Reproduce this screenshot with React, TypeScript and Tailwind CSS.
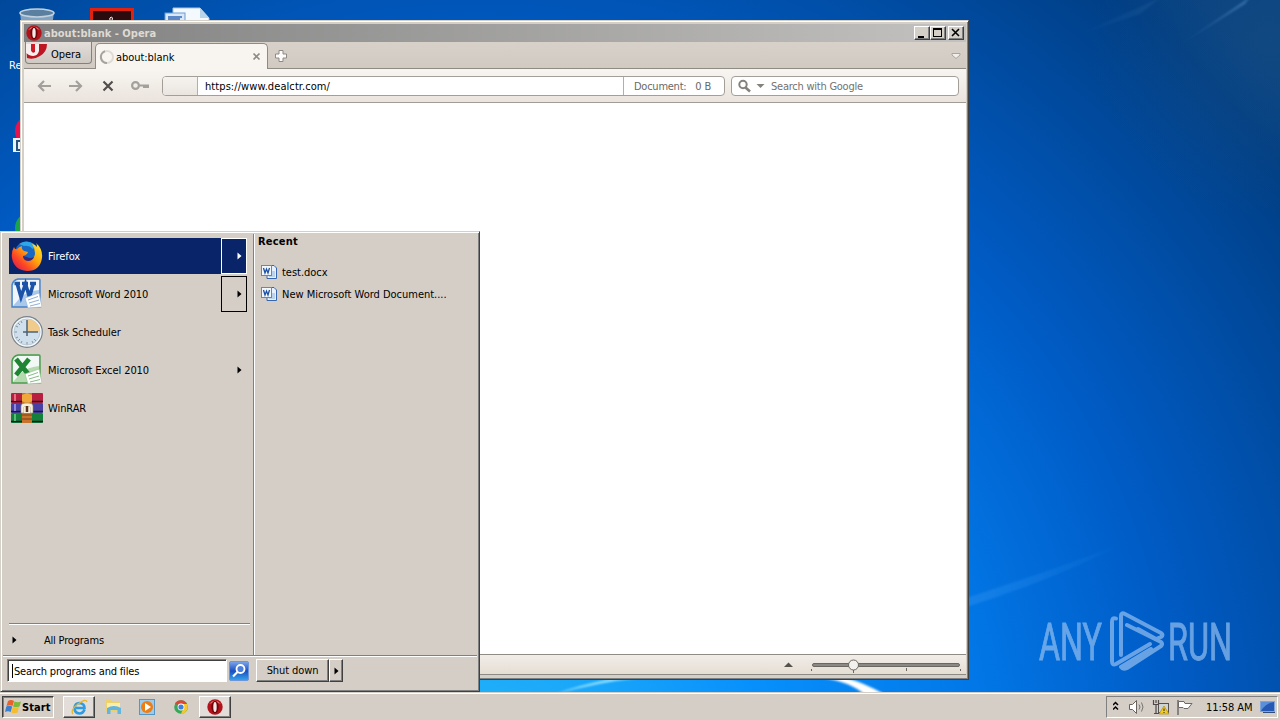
import type { ReactNode } from "react";
import { clsx } from "clsx";

const RAISED =
  "border border-t-white border-l-white border-r-[#404040] border-b-[#404040] shadow-[inset_-1px_-1px_0_#808080]";

function Wallpaper() {
  return (
    <svg className="absolute inset-0" width="1280" height="720" viewBox="0 0 1280 720">
      <defs>
        <radialGradient id="sky" gradientUnits="userSpaceOnUse" cx="480" cy="760" r="1050">
          <stop offset="0" stopColor="#25b6f8" />
          <stop offset="0.14" stopColor="#18a4fa" />
          <stop offset="0.27" stopColor="#0790fc" />
          <stop offset="0.47" stopColor="#0278e8" />
          <stop offset="0.66" stopColor="#005cc6" />
          <stop offset="0.84" stopColor="#004a9e" />
          <stop offset="0.95" stopColor="#003e84" />
          <stop offset="1" stopColor="#064080" />
        </radialGradient>
        <radialGradient id="haze" gradientUnits="userSpaceOnUse" cx="1270" cy="40" r="180">
          <stop offset="0" stopColor="#2a5c86" stopOpacity="0.3" />
          <stop offset="1" stopColor="#2a5c86" stopOpacity="0" />
        </radialGradient>
        <linearGradient id="ray" x1="1" y1="0" x2="0" y2="1">
          <stop offset="0" stopColor="#5b97cf" stopOpacity="0.5" />
          <stop offset="1" stopColor="#5b97cf" stopOpacity="0" />
        </linearGradient>
        <linearGradient id="glow" x1="0" y1="0" x2="1" y2="0">
          <stop offset="0" stopColor="#2f93ef" stopOpacity="0.45" />
          <stop offset="1" stopColor="#2f93ef" stopOpacity="0" />
        </linearGradient>
        <filter id="soft">
          <feGaussianBlur stdDeviation="1.3" />
        </filter>
      </defs>
      <rect width="1280" height="720" fill="url(#sky)" />
      <rect x="1050" width="230" height="240" fill="url(#haze)" />
      <path d="M1250 -3L1175 48L1245 4Z" fill="url(#ray)" filter="url(#soft)" />
      <path d="M1160 -2L1070 38L1140 14Z" fill="url(#ray)" opacity="0.3" filter="url(#soft)" />
      <path d="M960 609Q1060 578 1130 540Q1060 568 960 600Z" fill="url(#glow)" filter="url(#soft)" />
      <path d="M555 694Q600 682 640 678L610 679Q580 685 555 694Z" fill="#8fe0ff" filter="url(#soft)" />
      <path d="M824 678Q850 682 864 694H884Q862 682 846 678Z" fill="#fff" filter="url(#soft)" />
    </svg>
  );
}

function DesktopIcons() {
  return (
    <svg className="absolute inset-0" width="240" height="240" viewBox="0 0 240 240">
      <path d="M20 12L24 50H49L54 12Z" fill="#7fa3c4" />
      <ellipse cx="37" cy="13" rx="17" ry="4" fill="#5b7f9f" stroke="#c3d2de" strokeWidth="1.600" />
      <rect x="91.500" y="9.500" width="41" height="30" fill="#2b0b0d" stroke="#e3210f" strokeWidth="3" />
      <path d="M110 21Q109 17 111.500 17Q113 17 112 21" fill="none" stroke="#fff" strokeWidth="1" />
      <path d="M173 8H200L209 18V30H173Z" fill="#f4f9fd" stroke="#a9c6dd" />
      <path d="M200 8V18H209Z" fill="#b9d3e8" />
      <rect x="165" y="13" width="20" height="16" fill="#d9e8f8" stroke="#6d9bd2" />
      <path d="M168 17H182M168 19H180" stroke="#3568b8" strokeWidth="1.500" />
      <circle cx="31" cy="131" r="16" fill="#e5124d" />
      <rect x="13" y="138" width="14" height="14" fill="#e8f3fb" />
      <path d="M21 141H17V150H21" fill="none" stroke="#27537a" strokeWidth="2" />
      <circle cx="31" cy="228" r="16" fill="#1aa34a" />
    </svg>
  );
}

function OperaIcon({ size }: { size: number }) {
  return (
    <svg width={size} height={size} viewBox="0 0 16 16" className="shrink-0">
      <circle cx="8" cy="8" r="7.700" fill="#b3121a" />
      <path d="M2 5Q8 -2 14 5Q8 2 2 5Z" fill="#e8776f" />
      <ellipse cx="8" cy="8" rx="3.600" ry="6.200" fill="#6e0509" />
      <ellipse cx="8" cy="8" rx="1.700" ry="5" fill="#f4e9e6" />
    </svg>
  );
}

function Caption({ children }: { children: ReactNode }) {
  return (
    <div className={clsx("h-[14px] w-4 bg-[#d4d0c8]", RAISED)}>
      <svg width="14" height="12" viewBox="0 0 14 12" className="block" shapeRendering="crispEdges">
        {children}
      </svg>
    </div>
  );
}

function TitleBar() {
  return (
    <div className="flex h-[18px] items-center bg-gradient-to-r from-[#808080] to-[#c3c2c0] pr-[2px] pl-[2px]">
      <OperaIcon size={16} />
      <span className="ml-[2px] text-[11px] font-bold tracking-[0.02px] text-[#dedad3]">about:blank - Opera</span>
      <div className="ml-auto flex">
        <Caption>
          <path d="M3 9H9V11H3Z" fill="#000" />
        </Caption>
        <Caption>
          <path d="M2 1H11V10H2ZM3 3V9H10V3Z" fill="#000" fillRule="evenodd" />
        </Caption>
        <div className="w-[2px]" />
        <Caption>
          <path d="M3 2L10 9M10 2L3 9" stroke="#000" strokeWidth="1.600" shapeRendering="auto" />
        </Caption>
      </div>
    </div>
  );
}

function TabBar() {
  return (
    <div className="flex h-[27px] border-b border-[#8e8a84] bg-gradient-to-b from-[#d8d1ca] to-[#d0cac2]">
      <div className="ml-px flex h-[22px] w-[67px] items-center rounded-b-[4px] border border-t-0 border-[#85807b] bg-gradient-to-b from-[#e3deda] to-[#cfc9c3]">
        <svg width="22" height="18" viewBox="0 0 22 18" className="-mt-[1px] shrink-0">
          <path d="M0 1H21Q21 9 14 13Q8 17 1 15Z" fill="#bd1622" />
          <path d="M0 1H5V7Q6 11 9 9V1H13V8Q11 15 3 12L0 10Z" fill="#f7efed" />
          <path d="M5 1H9V7Q7 10 5 7Z" fill="#cf1a28" />
        </svg>
        <span className="ml-[3px] pt-[3px] text-[11px] tracking-[-0.05px]">Opera</span>
      </div>
      <div className="-mb-px ml-[3px] flex h-[26px] w-[173px] items-center rounded-t-[5px] border border-b-0 border-[#8e8a84] bg-[#f8f5f1] pl-[3px] mt-px">
        <svg width="16" height="16" viewBox="0 0 16 16" className="shrink-0">
          <circle cx="8" cy="8" r="6" fill="none" stroke="#dedbd7" strokeWidth="2" />
          <path d="M8 14A6 6 0 0 1 6 2.300" fill="none" stroke="#a5a29f" strokeWidth="2" />
        </svg>
        <span className="ml-[1px] pt-[1px] text-[11px] tracking-[-0.05px]">about:blank</span>
        <svg width="9" height="9" viewBox="0 0 9 9" className="mr-[6px] ml-auto">
          <path d="M1.500 1.500L7.500 7.500M7.500 1.500L1.500 7.500" stroke="#8e8a86" strokeWidth="1.700" />
        </svg>
      </div>
      <svg width="14" height="14" viewBox="0 0 14 14" className="mt-[7px] ml-[6px]">
        <path d="M5 1.500H9V5H12.500V9H9V12.500H5V9H1.500V5H5Z" fill="#fdfcfa" stroke="#8e8a86" />
      </svg>
      <svg width="10" height="8" viewBox="0 0 10 8" className="mt-[10px] mr-[5px] ml-auto">
        <path d="M1 1.500H9V3L5 6.500L1 3Z" fill="#f2efeb" stroke="#aaa49d" />
      </svg>
    </div>
  );
}

function Toolbar() {
  return (
    <div className="flex h-[34px] items-center border-b border-[#a19c96] bg-gradient-to-b from-[#f8f5f1] to-[#ebe4dd] pr-[7px]">
      <svg width="138" height="32" viewBox="0 0 138 32" className="shrink-0" fill="none" stroke="#a39f9b" strokeWidth="2.200">
        <path d="M27 16H15M20 11L15 16L20 21" />
        <path d="M45 16H57M52 11L57 16L52 21" />
        <path d="M79.500 11.500L88.500 20.500M88.500 11.500L79.500 20.500" stroke="#514e4b" strokeWidth="2.200" />
        <circle cx="111.500" cy="15.500" r="3.400" strokeWidth="2.200" />
        <path d="M115.500 15.500H125M119 17H125" strokeWidth="2" />
      </svg>
      <div className="flex h-5 w-[563px] items-center rounded-[4px] border border-[#a39e98] bg-white">
        <div className="h-full w-[35px] shrink-0 rounded-l-[3px] border-r border-[#b3aea9] bg-gradient-to-b from-[#f6f3ef] to-[#eae5df]" />
        <span className="ml-[7px] pt-px text-[11px] tracking-[0.08px]">https://www.dealctr.com/</span>
        <div className="ml-auto flex h-full w-[101px] items-center border-l border-[#b3aea9] pl-[10px] text-[11px] text-[#6b6865]">
          <span className="pt-[2px] tracking-[-0.25px]">Document:</span>
          <span className="ml-[9px] pt-[2px] tracking-[-0.2px]">0 B</span>
        </div>
      </div>
      <div className="ml-auto flex h-5 w-[228px] items-center rounded-[4px] border border-[#a39e98] bg-white pl-[6px]">
        <svg width="28" height="14" viewBox="0 0 28 14">
          <circle cx="5" cy="5.500" r="3.700" fill="none" stroke="#85817d" strokeWidth="2" />
          <path d="M7.500 8.500L12 12.500" stroke="#85817d" strokeWidth="2.600" />
          <path d="M18.500 5H26.500L22.500 9Z" fill="#85817d" />
        </svg>
        <span className="ml-[5px] pt-px text-[11px] tracking-[-0.24px] text-[#74716e]">Search with Google</span>
      </div>
    </div>
  );
}

function BrowserWindow() {
  return (
    <div className="absolute top-[20px] left-[20px] flex h-[660px] w-[949px] flex-col border border-t-[#d4d0c8] border-r-[#404040] border-b-[#404040] border-l-[#d4d0c8] bg-[#d4d0c8] p-[3px] pb-[4px] pr-[2px] shadow-[inset_1px_1px_0_#fff,inset_-1px_-1px_0_#808080]">
      <TitleBar />
      <TabBar />
      <Toolbar />
      <div className="flex-1 bg-white" />
      <div className="flex h-[21px] border-t border-[#8e8a84] border-b bg-gradient-to-b from-[#f2ede8] to-[#e5ded4]">
        <svg width="200" height="20" viewBox="0 0 200 20" className="mr-[3px] ml-auto">
          <path d="M21 12L25.500 7.500L30 12Z" fill="#55524e" />
          <rect x="49.500" y="8.500" width="147" height="3" rx="1.500" fill="#8d8883" stroke="#6b6762" />
          <path d="M48.500 14V16M143.500 13V16M197.500 14V16M90.500 15V18" stroke="#6b6762" />
          <circle cx="90.500" cy="10" r="5" fill="#f3f1ee" stroke="#6b6762" />
        </svg>
      </div>
    </div>
  );
}

function FirefoxIcon() {
  return (
    <svg width="32" height="32" viewBox="0 0 32 32">
      <defs>
        <linearGradient id="fx" x1="0.95" y1="0.1" x2="0.1" y2="0.9">
          <stop offset="0" stopColor="#ffe226" />
          <stop offset="0.4" stopColor="#ffa60d" />
          <stop offset="0.75" stopColor="#fb4425" />
          <stop offset="1" stopColor="#e0204e" />
        </linearGradient>
      </defs>
      <circle cx="15.500" cy="13" r="11.500" fill="#1769c5" />
      <path d="M8 4Q15 -1 23 4Q25 7 22 9Q18 5 13 6Z" fill="#2fa5ea" />
      <path
        d="M3 7Q4 10 6 9Q8 7 11 6Q10 9 13 11L17 12Q16 15 12 16Q13 20 18 20Q24 19 24 13Q24 8 21 4Q25 5 26 7Q26 4 25 3Q32 9 31 18Q29 31 16 31Q3 30 1 18Q0 12 3 7Z"
        fill="url(#fx)"
      />
      <path d="M12 16Q12 21 18 21Q22 20 23 17Q19 19 16 17Z" fill="#38277a" />
    </svg>
  );
}

function OfficeIcon({ kind }: { kind: "word" | "excel" }) {
  const word = kind === "word";
  const main = word ? "#1b53a8" : "#1f8434";
  return (
    <svg width="32" height="32" viewBox="0 0 32 32" className="-ml-[2px]">
      <path d="M8 1H29Q30 1 30 2V29H2V7Q3 2 8 1Z" fill={word ? "#a9c8ea" : "#b5dab0"} stroke={word ? "#4a83c6" : "#489c4d"} strokeWidth="1.400" />
      <path d="M3 8Q4 2 9 2H29V12Q17 13 10 20L3 28Z" fill="#f7fbfe" opacity="0.9" />
      {word ? (
        <path d="M4.500 5.500H10M12 5.500H18M20 5.500H26M7 5L11 19L15.500 6L19.500 19L23.500 5" fill="none" stroke={main} strokeWidth="3.600" />
      ) : (
        <path d="M6 5L19 21M19 5L6 21" stroke={main} strokeWidth="4.800" />
      )}
      <path d="M15 20L29 15L32 29L18 30Z" fill="#fff" stroke={word ? "#9ab9dd" : "#9cc79b"} strokeWidth="0.700" />
      <path d="M18 22L28 18.500M19 25L29 22M20 28L30 25.500" stroke={word ? "#8faed4" : "#87bb88"} />
    </svg>
  );
}

function ClockIcon() {
  return (
    <svg width="34" height="34" viewBox="0 0 34 34">
      <circle cx="17" cy="17" r="15.300" fill="#f4f7f9" stroke="#77838c" strokeWidth="1.200" />
      <circle cx="17" cy="17" r="13" fill="#cfdfec" stroke="#b5c3ce" strokeWidth="0.800" />
      <path d="M17 17V4A13 13 0 0 1 30 17Z" fill="#f0cb8b" />
      <path d="M17 5V21M13 17H28" stroke="#4d6373" strokeWidth="1.500" />
      <path d="M4.500 17H7M17 27V29.500M8 8L10 10M8 26L10 24M26 26L24 24M5.700 11L8 12M5.700 23L8 22M11 28L12 26M23 28L22 26M11 6L12 8" stroke="#8195a5" />
    </svg>
  );
}

function WinRarIcon() {
  return (
    <svg width="34" height="32" viewBox="0 0 34 32">
      <rect x="1" y="1" width="32" height="10" rx="1" fill="#b81e3d" />
      <rect x="1" y="11" width="32" height="10" rx="1" fill="#4840a5" />
      <rect x="1" y="21" width="32" height="10" rx="1" fill="#13803c" />
      <path d="M1 9.500H33M1 19.500H33M1 29.500H33" stroke="#1c1633" strokeWidth="1.500" />
      <path d="M5 2V9" stroke="#e66c80" strokeWidth="2" />
      <path d="M5 12V19" stroke="#8e88de" strokeWidth="2" />
      <path d="M5 22V29" stroke="#57be77" strokeWidth="2" />
      <rect x="12" y="1" width="10" height="30" fill="#c6742b" />
      <path d="M12 3L17 1L22 3V9L17 12L12 9Z" fill="#f0a73b" />
      <path d="M12 23H22M12 27H22" stroke="#7e3f14" />
      <path d="M11 21V14Q11 11 17 11Q23 11 23 14V21H20V15H14V21Z" fill="#f6efdc" stroke="#8a8371" strokeWidth="0.600" />
      <path d="M14 15H20V21H14Z" fill="#f6efdc" />
      <path d="M17 14V20" stroke="#5d3018" strokeWidth="2.500" />
    </svg>
  );
}

const PROGRAMS: { name: string; icon: ReactNode; arrow?: boolean; boxed?: boolean }[] = [
  { name: "Firefox", icon: <FirefoxIcon />, arrow: true, boxed: true },
  { name: "Microsoft Word 2010", icon: <OfficeIcon kind="word" />, arrow: true, boxed: true },
  { name: "Task Scheduler", icon: <ClockIcon /> },
  { name: "Microsoft Excel 2010", icon: <OfficeIcon kind="excel" />, arrow: true },
  { name: "WinRAR", icon: <WinRarIcon /> },
];

function Arrow() {
  return (
    <svg width="5" height="8" viewBox="0 0 5 8">
      <path d="M0.500 0.500L4.500 4L0.500 7.500Z" fill="currentColor" />
    </svg>
  );
}

function RecentDoc({ name }: { name: string }) {
  return (
    <div className="flex h-[22px] items-center">
      <svg width="16" height="16" viewBox="0 0 16 16" className="shrink-0">
        <path d="M6 1.500H13L15.500 4V14.500H6Z" fill="#e8f1fb" stroke="#3666ad" />
        <path d="M10 8H14M10 10H14M8 12H14" stroke="#91b3dd" />
        <rect x="0.500" y="1.500" width="10" height="10" fill="#f3f8fd" stroke="#5a8ac6" />
        <path d="M2.500 4L4 9L5.500 5L7 9L8.500 4" fill="none" stroke="#1d4fa1" strokeWidth="1.300" />
      </svg>
      <span className="ml-[5px] text-[11px] tracking-[-0.02px]">{name}</span>
    </div>
  );
}

function StartMenu() {
  return (
    <div className="absolute top-[231px] left-0 flex h-[461px] w-[480px] flex-col border border-t-[#d4d0c8] border-r-[#404040] border-b-[#404040] border-l-[#d4d0c8] bg-[#d5cec7] p-[2px] shadow-[inset_1px_1px_0_#fff,inset_-1px_-1px_0_#808080]">
      <div className="flex h-[421px]">
        <div className="flex w-[251px] flex-col border-r border-[#808080] pt-[4px] pl-[6px]">
          {PROGRAMS.map((p, i) => (
            <div
              key={p.name}
              className={clsx("mb-[2px] flex h-9 w-[238px] items-center", i === 0 && "bg-[#0a246a] text-white")}
            >
              <div className="flex w-[36px] shrink-0 justify-center">{p.icon}</div>
              <span className="ml-[3px] text-[11px] tracking-[-0.08px]">{p.name}</span>
              {p.arrow && (
                <div
                  className={clsx(
                    "ml-auto flex h-full w-[26px] items-center justify-end border pr-[4px]",
                    !p.boxed && "border-transparent",
                    p.boxed && (i === 0 ? "border-white" : "border-black"),
                  )}
                >
                  <Arrow />
                </div>
              )}
            </div>
          ))}
          <div className="mt-auto w-[241px] border-t border-b border-t-[#808080] border-b-white" />
          <div className="flex h-[30px] items-center pl-[3px] text-[11px]">
            <Arrow />
            <span className="ml-[27px] tracking-[-0.2px]">All Programs</span>
          </div>
        </div>
        <div className="flex-1 border-l border-white pl-[3px]">
          <div className="pt-px text-[11px] leading-[14px] font-bold tracking-[0.2px]">Recent</div>
          <div className="mt-[12px] pl-[3px]">
            <RecentDoc name="test.docx" />
            <RecentDoc name="New Microsoft Word Document...." />
          </div>
        </div>
      </div>
      <div className="border-t border-b border-t-[#808080] border-b-white" />
      <div className="flex items-start pt-[2px] pl-[4px]">
        <div className="flex h-[23px] w-[220px] items-center border border-t-[#808080] border-r-white border-b-white border-l-[#808080] bg-white pl-[4px] shadow-[inset_1px_1px_0_#404040]">
          <div className="h-[14px] w-px bg-black" />
          <span className="ml-px pt-px text-[11px] tracking-[-0.18px]">Search programs and files</span>
        </div>
        <svg width="20" height="20" viewBox="0 0 20 20" className="mt-[2px] ml-[2px]">
          <defs>
            <linearGradient id="find" x1="0" y1="0" x2="0" y2="1">
              <stop offset="0" stopColor="#7ea9ec" />
              <stop offset="0.5" stopColor="#1c4fc0" />
              <stop offset="1" stopColor="#35a6ee" />
            </linearGradient>
          </defs>
          <rect x="0.500" y="0.500" width="19" height="19" rx="1.500" fill="url(#find)" stroke="#6e95d6" />
          <circle cx="11.500" cy="8" r="4" fill="#4c80dd" stroke="#fff" strokeWidth="1.800" />
          <path d="M8.500 11L4 15.500" stroke="#fff" strokeWidth="2.200" />
        </svg>
        <div className={clsx("ml-[7px] flex h-[23px] w-[73px] items-center justify-center text-[11px] tracking-[-0.1px]", RAISED)}>
          Shut down
        </div>
        <div className={clsx("flex h-[23px] w-[14px] items-center justify-center", RAISED)}>
          <Arrow />
        </div>
      </div>
    </div>
  );
}

function AnyRunLogo() {
  return (
    <svg className="absolute top-[606px] left-[1034px]" width="246" height="70" viewBox="0 0 246 70">
      <g fill="#8fbdf0" stroke="#8fbdf0" strokeWidth="1" opacity="0.72" fontFamily="Roboto, sans-serif" fontSize="52">
        <text x="5" y="54" textLength="63" lengthAdjust="spacingAndGlyphs">ANY</text>
        <text x="134" y="54" textLength="64" lengthAdjust="spacingAndGlyphs">RUN</text>
      </g>
      <g fill="none" stroke="#8fbdf0" strokeWidth="4" opacity="0.72" strokeLinejoin="round" strokeLinecap="round">
        <path d="M82 12.500Q78 11 78 16V55Q78 60 82 58L116 38" />
        <path d="M87 49V10Q87 6 91 8L127 27Q130 29 127 31L122 33L104 23" />
        <path d="M93 19L127 36Q129 38 127 40L93 62Q89 64 87 61L117 43" />
      </g>
    </svg>
  );
}

function TaskButton({ active, children }: { active?: boolean; children: ReactNode }) {
  return (
    <div className={clsx("flex h-[22px] w-8 items-center justify-center", active && RAISED, active && "bg-[#e2ddd8]")}>
      {children}
    </div>
  );
}

function Taskbar() {
  return (
    <div className="absolute bottom-0 left-0 flex h-7 w-full items-start border-t border-[#d4d0c8] bg-[#d5cec7] pt-[3px] pl-[2px] shadow-[inset_0_1px_0_#fff]">
      <div className="flex h-[22px] w-[52px] items-center border border-t-[#404040] border-r-white border-b-white border-l-[#404040] pl-[2px] shadow-[inset_1px_1px_0_#808080]">
        <svg width="17" height="16" viewBox="0 0 17 16" className="shrink-0">
          <path d="M3 2Q6 0 9 2L7.500 7Q5 5.500 1.500 7Z" fill="#e8622c" />
          <path d="M9.500 2.500Q13 4 16 2.500L14.500 7.500Q11 9 8 7.500Z" fill="#7fb83b" />
          <path d="M1.300 7.500Q4 6 7.200 7.500L5.700 13Q3 11.500 0 13Z" fill="#3d7fcc" />
          <path d="M7.700 8Q11 9.500 14 8L12.500 13.500Q9 15 6.200 13.500Z" fill="#f5bd2b" />
        </svg>
        <span className="pt-px text-[11px] font-bold tracking-[0.1px]">Start</span>
      </div>
      <div className="ml-[9px] flex gap-[2px]">
        <TaskButton active>
          <svg width="17" height="17" viewBox="0 0 17 17" fill="none">
            <path d="M13.500 10.500Q12 14.500 8.500 14.500Q3.500 14 3.500 9Q4 4 8.500 4Q13.500 4.500 13.500 9H5" stroke="#2c9ce5" strokeWidth="2.600" />
            <path d="M2 15Q-1 11 7 5Q15 -1 16 3" stroke="#e9b823" strokeWidth="1.300" />
          </svg>
        </TaskButton>
        <TaskButton>
          <svg width="17" height="16" viewBox="0 0 17 16">
            <path d="M1 1H6L7 3H14V13H1Z" fill="#edd16d" />
            <path d="M2 4H15V9H2Z" fill="#fbedaa" />
            <path d="M2 15V9Q9 5 16 9V15H12.500V11H5.500V15Z" fill="#61b5df" />
          </svg>
        </TaskButton>
        <TaskButton>
          <svg width="16" height="16" viewBox="0 0 16 16">
            <rect x="0.500" y="0.500" width="15" height="15" fill="#9ecbea" stroke="#5795c2" />
            <circle cx="8" cy="8" r="6" fill="#ee7d12" />
            <path d="M6 4V12L12 8Z" fill="#fff" />
          </svg>
        </TaskButton>
        <TaskButton>
          <svg width="14" height="14" viewBox="0 0 14 14">
            <circle cx="7" cy="7" r="6.800" fill="#37a853" />
            <path d="M7 7L1 3.500A6.800 6.800 0 0 1 13 4H7Z" fill="#dc4638" />
            <path d="M7 13.800A6.800 6.800 0 0 0 13 4H7L9.500 8Z" fill="#f8c72d" />
            <circle cx="7" cy="7" r="3.400" fill="#fff" />
            <circle cx="7" cy="7" r="2.600" fill="#3f7fe0" />
          </svg>
        </TaskButton>
        <TaskButton active>
          <OperaIcon size={16} />
        </TaskButton>
      </div>
      <div className="mr-[2px] ml-auto flex h-[22px] w-[172px] items-center border border-t-[#808080] border-r-white border-b-white border-l-[#808080] pl-[6px]">
        <svg width="86" height="18" viewBox="0 0 86 18" className="shrink-0">
          <path d="M0 7L2.500 4.500L5 7M0 11.500L2.500 9L5 11.500" fill="none" stroke="#000" strokeWidth="1.500" />
          <path d="M16.500 6.500H19.500L23.500 2.500V15.500L19.500 11.500H16.500Z" fill="#fff" stroke="#66625f" />
          <path d="M26 6.500Q28 9 26 11.500M28.500 4.500Q31.500 9 28.500 13.500" fill="none" stroke="#77736f" />
          <rect x="45.500" y="5.500" width="10" height="9" fill="#cfd4d7" stroke="#55514e" />
          <path d="M40.500 2V6.500H45.500V2M43 2V5" fill="none" stroke="#4c4946" strokeWidth="1.200" />
          <path d="M43 6V16M41 15.500H46" stroke="#4c4946" strokeWidth="1.200" />
          <path d="M51 8L56 16H46Z" fill="#f7cd1d" stroke="#b1890a" strokeWidth="0.700" />
          <path d="M51 10.500V13M51 14V15" stroke="#222" />
          <path d="M65 2V17" stroke="#5f5b58" strokeWidth="1.300" />
          <path d="M65.500 3.500H71L72 5.500H79L75 10.500H71L70 9.500H65.500Z" fill="#fff" stroke="#6d6966" />
        </svg>
        <span className="ml-[7px] pt-px text-[11px] tracking-[-0.05px] whitespace-nowrap">11:58 AM</span>
        <svg width="16" height="14" viewBox="0 0 16 14" className="mr-px ml-auto shrink-0">
          <rect x="0.500" y="1.500" width="14" height="10" fill="#2659b3" stroke="#80a6d9" />
          <path d="M1 11Q6 3 14 2H1Z" fill="#5b8fd9" />
          <path d="M3 12.500H15" stroke="#314d7d" />
        </svg>
      </div>
    </div>
  );
}

export default function App() {
  return (
    <div className="relative h-[720px] w-[1280px] overflow-hidden bg-[#0058c0] font-['DejaVu_Sans_Condensed','DejaVu_Sans',sans-serif] leading-none whitespace-nowrap text-black">
      <Wallpaper />
      <DesktopIcons />
      <span className="absolute top-[60px] left-[9px] text-[11px] text-white">Re</span>
      <AnyRunLogo />
      <BrowserWindow />
      <StartMenu />
      <Taskbar />
    </div>
  );
}
